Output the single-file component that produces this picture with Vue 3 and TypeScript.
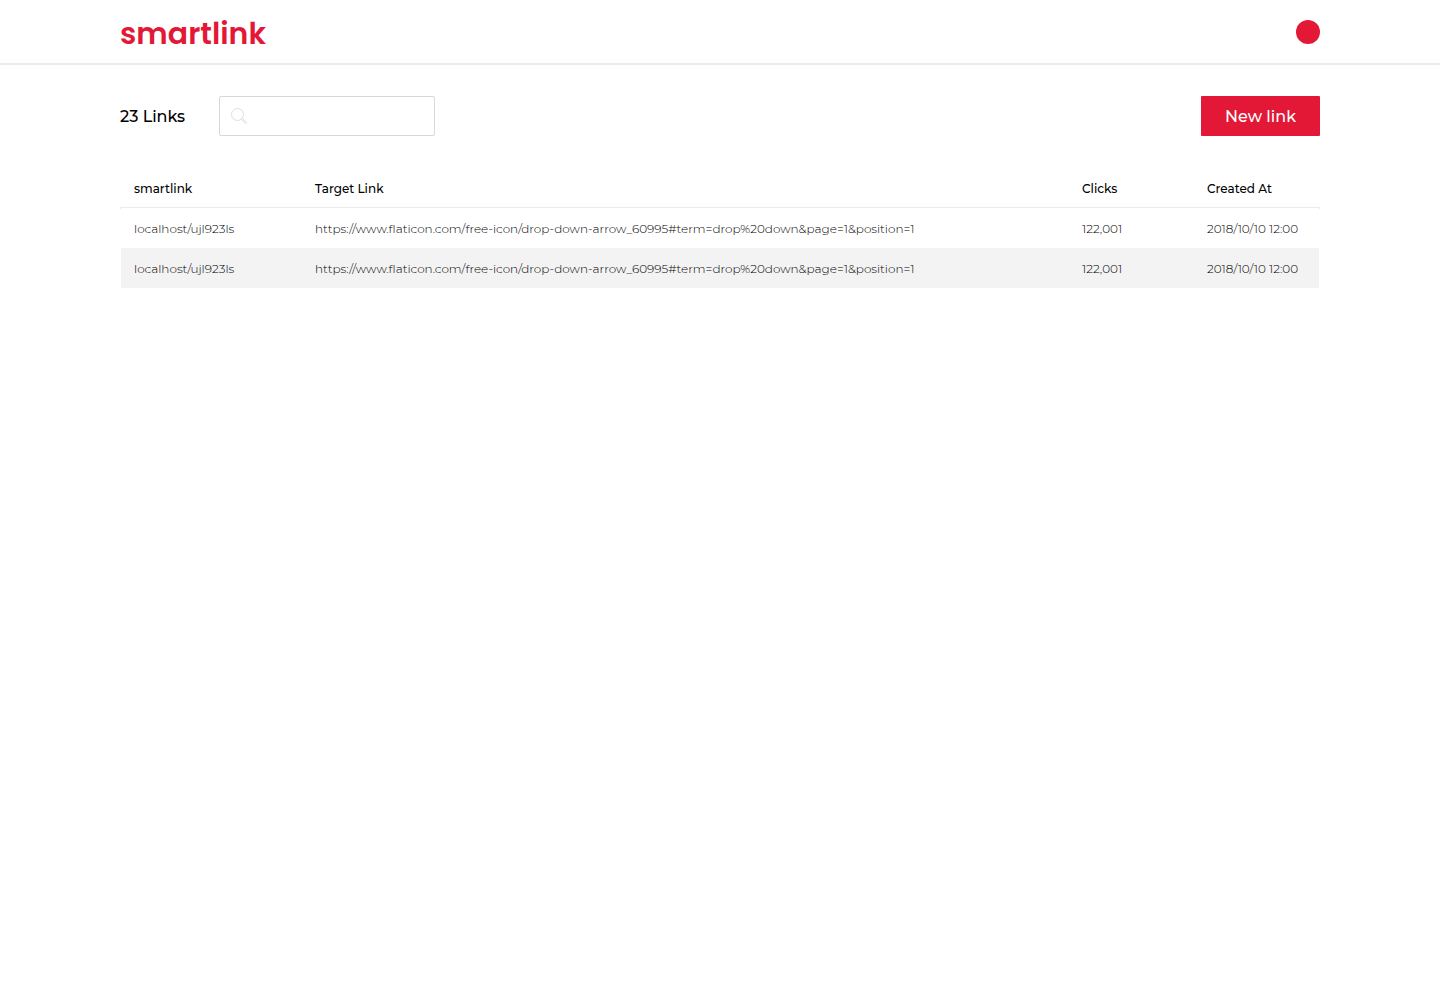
<script setup lang="ts">
import { ref } from 'vue'

interface LinkRow {
  id: number
  short: string
  target: string
  clicks: string
  createdAt: string
}

const total = 23
const query = ref('')
const target =
  'https://www.flaticon.com/free-icon/drop-down-arrow_60995#term=drop%20down&page=1&position=1'
const links: LinkRow[] = [1, 2].map((id) => ({
  id,
  short: 'localhost/ujl923ls',
  target,
  clicks: '122,001',
  createdAt: '2018/10/10 12:00',
}))
</script>

<template>
  <div class="page">
    <header class="topbar">
      <div class="container topbar-inner">
        <a class="logo" href="#">smartlink</a>
        <button class="avatar" type="button" aria-label="Account"></button>
      </div>
    </header>
    <main class="container">
      <div class="toolbar">
        <h1 class="count">{{ total }} Links</h1>
        <div class="search">
          <svg class="search-icon" viewBox="0 0 16 16" aria-hidden="true">
            <circle cx="6.5" cy="6.5" r="6" />
            <path d="M10.6 11.4l.8-.8 4.1 4.1-.8.8z" />
          </svg>
          <input v-model="query" type="text" aria-label="Search links" />
        </div>
        <button class="new-link" type="button">New link</button>
      </div>
      <table class="links">
        <colgroup>
          <col class="col-short" />
          <col />
          <col class="col-clicks" />
          <col class="col-created" />
        </colgroup>
        <thead>
          <tr>
            <th scope="col">smartlink</th>
            <th scope="col">Target Link</th>
            <th scope="col">Clicks</th>
            <th scope="col">Created At</th>
          </tr>
        </thead>
        <tbody>
          <tr v-for="link in links" :key="link.id">
            <td>{{ link.short }}</td>
            <td>{{ link.target }}</td>
            <td>{{ link.clicks }}</td>
            <td>{{ link.createdAt }}</td>
          </tr>
        </tbody>
      </table>
    </main>
  </div>
</template>

<style>
body {
  margin: 0;
  background: #fff;
}
</style>

<style scoped>
.page {
  font-family: Montserrat, Inter, sans-serif;
  color: #000;
}

.page * {
  box-sizing: border-box;
}

.container {
  max-width: 1200px;
  margin: 0 auto;
}

.topbar {
  border-bottom: 2px solid #ebebeb;
}

.topbar-inner {
  display: flex;
  align-items: center;
  justify-content: space-between;
  height: 63px;
}

.logo {
  padding-top: 4px;
  font-family: Poppins, Inter, sans-serif;
  font-size: 30px;
  font-weight: 600;
  line-height: 40px;
  color: #e21836;
  text-decoration: none;
}

.avatar {
  width: 24px;
  height: 24px;
  padding: 0;
  border: 0;
  border-radius: 50%;
  background: #e21836;
}

.toolbar {
  display: flex;
  align-items: center;
  padding: 31px 0 32px;
}

.count {
  width: 99px;
  margin: 0;
  padding-top: 2px;
  font-size: 16px;
  font-weight: 500;
  line-height: 24px;
}

.search {
  position: relative;
  width: 216px;
  height: 40px;
}

.search input {
  display: block;
  width: 100%;
  height: 100%;
  padding: 0 12px 0 36px;
  border: 1px solid #d8d8d8;
  border-radius: 2px;
  background: #fff;
  font: inherit;
  font-size: 16px;
}

.search-icon {
  position: absolute;
  top: 12px;
  left: 12px;
  width: 16px;
  height: 16px;
  fill: none;
  stroke: #dedede;
  stroke-width: 1;
}

.new-link {
  height: 40px;
  margin-left: auto;
  padding: 1px 24px 0;
  border: 0;
  border-radius: 1px;
  background: #e21836;
  color: #fff;
  font: inherit;
  font-size: 16px;
  font-weight: 500;
}

.links {
  width: 100%;
  table-layout: fixed;
  border-collapse: separate;
  border-spacing: 0;
  text-align: left;
}

.col-short {
  width: 182px;
}

.col-clicks {
  width: 125px;
}

.col-created {
  width: 126px;
}

th,
td {
  height: 40px;
  padding: 2px 0 0 13px;
  font-size: 12px;
  line-height: 16px;
  white-space: nowrap;
}

th {
  border-bottom: 1px solid #ebebeb;
  font-weight: 500;
}

td {
  font-weight: 300;
}

th:first-child,
td:first-child {
  border-left: 1px solid transparent;
}

td:last-child {
  border-right: 1px solid transparent;
}

tbody tr:nth-child(even) td {
  background: #f3f3f3;
  background-clip: padding-box;
}

/* The header rule turns down by one pixel at both ends */
tbody tr:first-child td:first-child {
  background: linear-gradient(#ebebeb, #ebebeb) left top / 1px 1px no-repeat border-box;
}

tbody tr:first-child td:last-child {
  background: linear-gradient(#ebebeb, #ebebeb) right top / 1px 1px no-repeat border-box;
}
</style>
